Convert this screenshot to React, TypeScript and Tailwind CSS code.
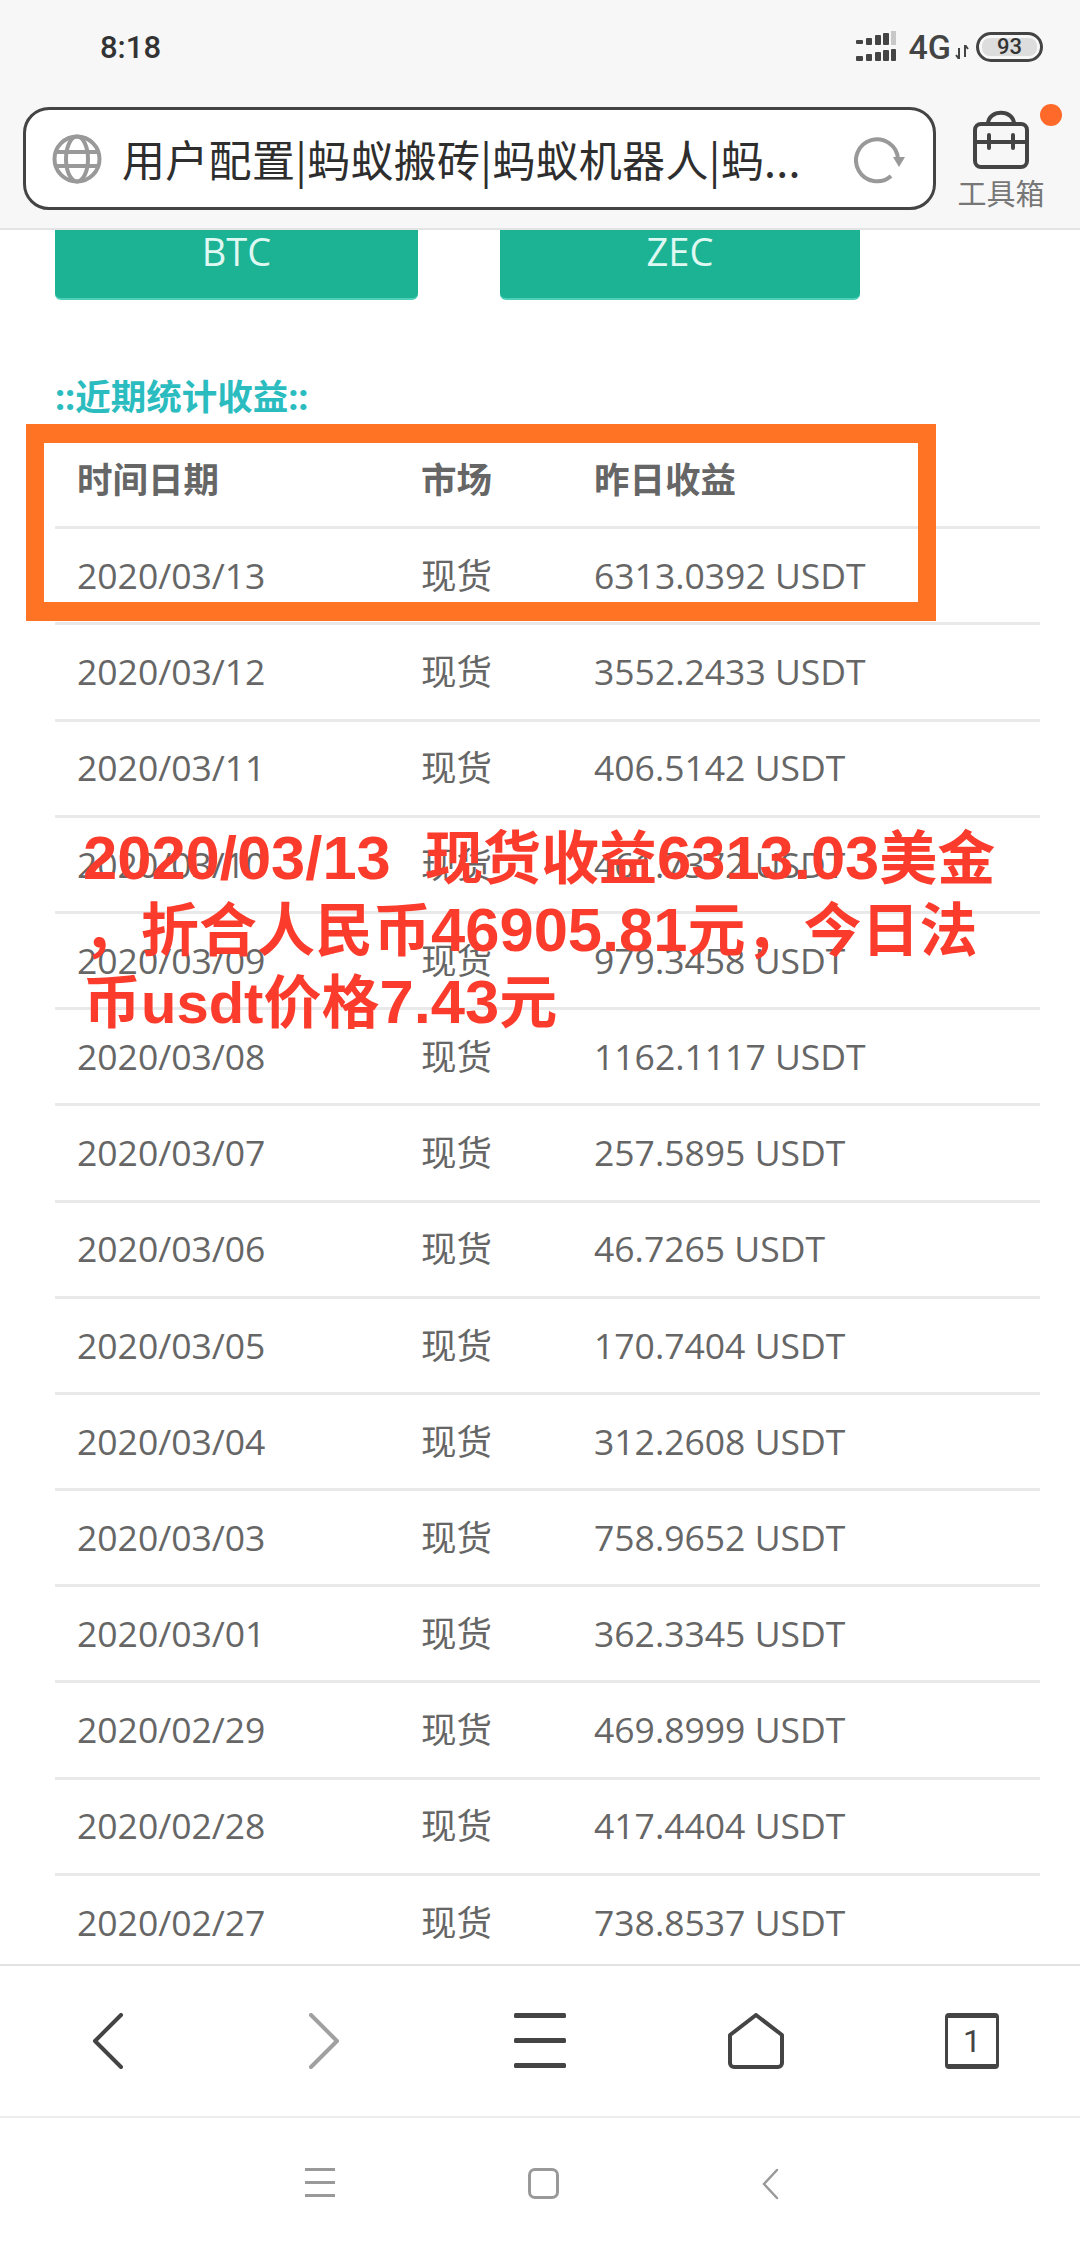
const rows = [
  ['2020/03/13', '6313.0392 USDT'],
  ['2020/03/12', '3552.2433 USDT'],
  ['2020/03/11', '406.5142 USDT'],
  ['2020/03/10', '461.7372 USDT'],
  ['2020/03/09', '979.3458 USDT'],
  ['2020/03/08', '1162.1117 USDT'],
  ['2020/03/07', '257.5895 USDT'],
  ['2020/03/06', '46.7265 USDT'],
  ['2020/03/05', '170.7404 USDT'],
  ['2020/03/04', '312.2608 USDT'],
  ['2020/03/03', '758.9652 USDT'],
  ['2020/03/01', '362.3345 USDT'],
  ['2020/02/29', '469.8999 USDT'],
  ['2020/02/28', '417.4404 USDT'],
  ['2020/02/27', '738.8537 USDT'],
];

const cjk = "font-['Open_Sans','Noto_Sans_CJK_SC',sans-serif]";

function StatusBar() {
  return (
    <div className="flex h-[94px] items-center justify-between pl-[100px] pr-[37px] text-[#333]">
      <span className="font-['Roboto',sans-serif] text-[31px] font-medium leading-none">8:18</span>
      <div className="flex items-center">
        {/* signal */}
        <svg width="42" height="32" viewBox="0 0 42 32" className="mr-[12px]">
          <g fill="#444">
            <rect x="1" y="9" width="7" height="4" rx="1" />
            <rect x="11" y="7" width="6" height="7" rx="1" />
            <rect x="20" y="4" width="6" height="10" rx="1" />
            <rect x="28" y="2" width="6" height="12" rx="1" />
            <rect x="1" y="25" width="7" height="5" rx="1" />
            <rect x="11" y="23" width="6" height="7" rx="1" />
            <rect x="20" y="21" width="6" height="9" rx="1" />
            <rect x="28" y="19" width="6" height="11" rx="1" />
            <rect x="36" y="18" width="5" height="12" rx="1" />
          </g>
          <rect x="36" y="0" width="5" height="14" fill="#c8c8c8" />
        </svg>
        <span className="font-['Roboto',sans-serif] text-[34px] font-medium leading-none text-[#444]">4G</span>
        <svg width="14" height="14" viewBox="0 0 14 14" className="ml-[4px] mt-[10px]" fill="none" stroke="#444" strokeWidth="2">
          <path d="M4 14V3M1 10l3 4M10 12V0M10 0l3 4" />
        </svg>
        <div className="ml-[7px] flex h-[30px] w-[67px] items-center justify-center rounded-full border-[3px] border-[#444] p-[3px]">
          <div className="flex h-full w-full items-center justify-center rounded-[8px] bg-[#ddd] font-['Roboto',sans-serif] text-[22px] font-medium leading-none text-[#333]">
            93
          </div>
        </div>
      </div>
    </div>
  );
}

function AddressBar() {
  return (
    <div className="flex h-[136px] items-start border-b-2 border-[#e4e4e4] pl-[23px] pt-[13px]">
      <div className="flex h-[103px] w-[913px] items-center rounded-[26px] border-[3px] border-[#444] bg-white pl-[26px]">
        <svg width="50" height="50" viewBox="0 0 50 50" fill="none" stroke="#999" strokeWidth="4">
          <circle cx="25" cy="25" r="22.5" />
          <ellipse cx="25" cy="25" rx="11" ry="22.5" />
          <path d="M3 18h44M3 32h44" />
        </svg>
        <span className="ml-[20px] w-[690px] whitespace-nowrap font-['Noto_Sans_CJK_SC',sans-serif] text-[43px] leading-none tracking-[0.3px] text-[#2e2e2e]">
          用户配置|蚂蚁搬砖|蚂蚁机器人|蚂...
        </span>
        <svg width="52" height="52" viewBox="0 0 52 52" fill="none" stroke="#999" strokeWidth="4" className="ml-[42px] shrink-0">
          <path d="M44 26A21 21 0 1 0 37 43" />
          <path d="M39 24h12l-6 10z" fill="#999" stroke="none" />
        </svg>
      </div>
      <div className="relative ml-[21px] flex w-[88px] flex-col items-center pt-[3px]">
        <svg width="58" height="60" viewBox="0 0 58 60" fill="none" stroke="#444" strokeWidth="4">
          <path d="M16 14c0-15 26-15 26 0" />
          <rect x="3" y="14" width="52" height="43" rx="6" />
          <path d="M3 32h52" />
          <path d="M17 25v13M41 25v13" strokeLinecap="round" />
        </svg>
        <span className="mt-[6px] font-['Noto_Sans_CJK_SC',sans-serif] text-[29px] leading-[32px] text-[#777]">工具箱</span>
        <div className="absolute left-[83px] top-[-3px] h-[22px] w-[22px] rounded-full bg-[#ff6a2b]" />
      </div>
    </div>
  );
}

function Cols({ a, b, c, bold }: { a: string; b: string; c: string; bold?: boolean }) {
  return (
    <div className={`grid h-[96.2px] grid-cols-[344px_173px_1fr] items-center border-b-[3px] border-[#e9e9e9] pl-[22px] text-[35.5px] leading-none text-[#666] ${bold ? 'font-bold' : ''}`}>
      <span>{a}</span>
      <span>{b}</span>
      <span>{c}</span>
    </div>
  );
}

function BottomBar() {
  return (
    <div className="grid h-[154px] grid-cols-5 items-center border-y-2 border-[#e2e2e2] border-b-[#ececec] bg-white">
      <div className="flex justify-center">
        <svg width="32" height="56" viewBox="0 0 32 56" fill="none" stroke="#444" strokeWidth="4" strokeLinecap="round" strokeLinejoin="round">
          <path d="M29 2L3 28l26 26" />
        </svg>
      </div>
      <div className="flex justify-center">
        <svg width="32" height="56" viewBox="0 0 32 56" fill="none" stroke="#a0a0a0" strokeWidth="4" strokeLinecap="round" strokeLinejoin="round">
          <path d="M3 2l26 26L3 54" />
        </svg>
      </div>
      <div className="flex justify-center">
        <svg width="52" height="56" viewBox="0 0 52 56" fill="#444">
          <rect x="0" y="0" width="52" height="5" rx="1.5" />
          <rect x="0" y="25" width="52" height="5" rx="1.5" />
          <rect x="0" y="50" width="52" height="5" rx="1.5" />
        </svg>
      </div>
      <div className="flex justify-center">
        <svg width="56" height="56" viewBox="0 0 56 56" fill="none" stroke="#444" strokeWidth="4" strokeLinejoin="round">
          <path d="M28 2L54 22V50a4 4 0 0 1-4 4H6a4 4 0 0 1-4-4V22z" />
        </svg>
      </div>
      <div className="flex justify-center">
        <div className="flex h-[56px] w-[54px] items-center justify-center rounded-[4px] border-[3px] border-b-[5px] border-t-[5px] border-[#444] font-['Roboto',sans-serif] text-[32px] leading-none text-[#444]">
          1
        </div>
      </div>
    </div>
  );
}

function SystemNav() {
  return (
    <div className="flex h-[130px] items-start justify-center bg-white pl-[4px] pt-[50px]">
      <svg width="30" height="30" viewBox="0 0 30 30" fill="#999" className="mr-[193px]">
        <rect y="0" width="30" height="3" />
        <rect y="13" width="30" height="3" />
        <rect y="26" width="30" height="3" />
      </svg>
      <div className="mr-[202px] h-[31px] w-[31px] rounded-[7px] border-[3px] border-[#999]" />
      <svg width="18" height="32" viewBox="0 0 18 32" fill="none" stroke="#999" strokeWidth="2.5" strokeLinecap="round">
        <path d="M16 2L3 16l13 14" />
      </svg>
    </div>
  );
}

// the digits of the red note run a little larger than the Chinese
function L({ children }: { children: string }) {
  return <span className="text-[61.5px]">{children}</span>;
}

export default function App() {
  return (
    <div className={`relative flex h-[2248px] w-[1080px] flex-col overflow-hidden bg-white ${cjk}`}>
      <div className="bg-[#f7f7f7]">
        <StatusBar />
        <AddressBar />
      </div>

      <div className="flex-1 overflow-hidden pl-[55px] pr-[40px]">
        <div className="flex gap-[82px]">
          <div className="flex h-[70px] w-[363px] items-start justify-center rounded-b-[6px] border-b-2 border-[#4fd0b8] bg-[#1cb394] text-[38px] leading-[42px] text-[#dff8f2]">
            BTC
          </div>
          <div className="flex h-[70px] w-[360px] items-start justify-center rounded-b-[6px] border-b-2 border-[#4fd0b8] bg-[#1cb394] text-[38px] leading-[42px] text-[#dff8f2]">
            ZEC
          </div>
        </div>

        <div className="mt-[73px] text-[35.5px] font-bold leading-[46px] text-[#2bbcc0]">::近期统计收益::</div>

        <div className="mt-[14px]">
          <Cols a="时间日期" b="市场" c="昨日收益" bold />
          {rows.map(([date, amount]) => (
            <Cols key={date} a={date} b="现货" c={amount} />
          ))}
        </div>
      </div>

      <BottomBar />
      <SystemNav />

      {/* annotations painted over the screenshot */}
      <div className="absolute left-[26px] top-[424px] h-[197px] w-[910px] border-x-[18px] border-y-[19px] border-[#ff7324]" />
      <div className="absolute left-[83px] top-[822px] whitespace-pre font-['Liberation_Sans','Noto_Sans_CJK_SC',sans-serif] text-[58px] font-bold leading-[72px] text-[#fb3b2c]">
        <div className="h-[72px]"><L>2020/03/13  </L>现货收益<L>6313.03</L>美金</div>
        <div className="h-[72px]">，折合人民币<L>46905.81</L>元，今日法</div>
        <div className="h-[72px]">币usdt价格<L>7.43</L>元</div>
      </div>
    </div>
  );
}
